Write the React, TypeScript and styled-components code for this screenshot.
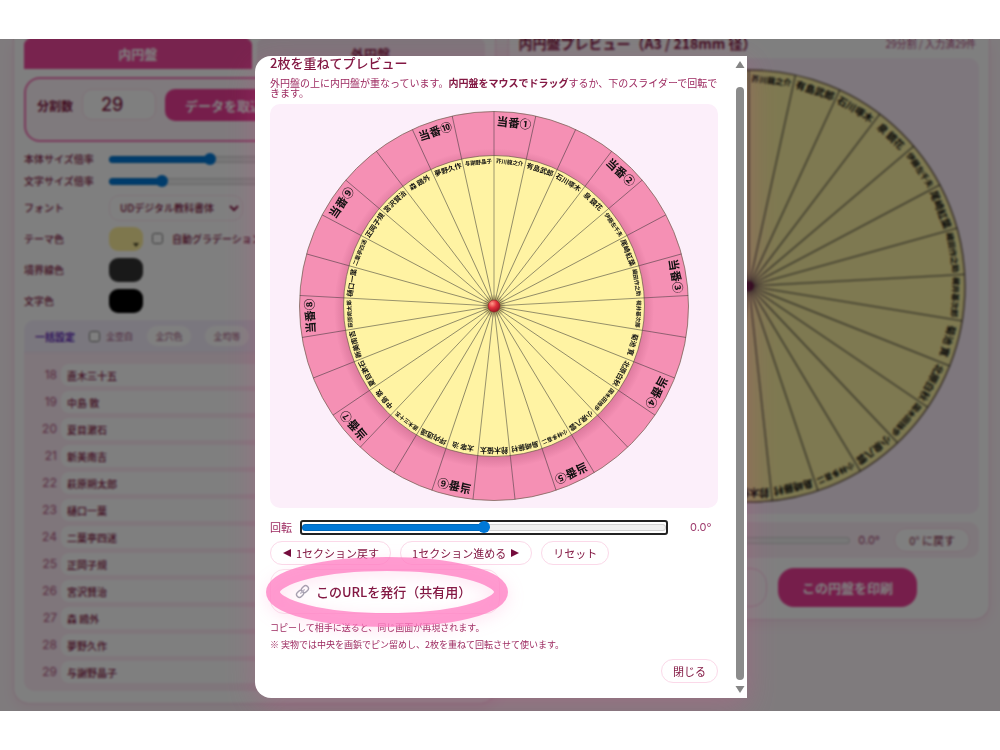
import React, { useState } from "react";
import styled, { createGlobalStyle, css } from "styled-components";

const GlobalStyle = createGlobalStyle`
  * { box-sizing: border-box; }
  body { margin: 0; background: #fff; }
  body, button, input, select {
    font-family: "Noto Sans CJK JP", "Noto Sans", sans-serif;
  }
  h2, p, ol { margin: 0; padding: 0; }
`;

const authors = [
  "芥川龍之介", "有島武郎", "石川啄木", "泉 鏡花", "伊藤左千夫", "尾崎紅葉",
  "織田作之助", "梶井基次郎", "菊池 寛", "北原白秋", "国木田独歩", "小泉八雲",
  "小林多喜二", "島崎藤村", "鈴木優太", "太宰 治", "坪内逍遥", "直木三十五",
  "中島 敦", "夏目漱石", "新美南吉", "萩原朔太郎", "樋口一葉", "二葉亭四迷",
  "正岡子規", "宮沢賢治", "森 鴎外", "夢野久作", "与謝野晶子",
];
const FIRST_LISTED = 18;
const duties = "①②③④⑤⑥⑦⑧⑨⑩".split("");
const dutyLabels = authors.map((_, i) => (i % 3 === 0 ? `当番${duties[i / 3]}` : ""));
const STEP = 360 / authors.length;

/* ---------- page ---------- */

const Screen = styled.main`
  padding: 39px 0;
`;

const Frame = styled.div`
  position: relative;
  overflow: hidden;
  background: #fff7fb;
`;

const Columns = styled.div`
  display: grid;
  grid-template-columns: 1fr 1fr;
  align-items: start;
  gap: 12px;
  padding: 0 10px 7px 13px;
`;

const Card = styled.section`
  padding: 0 10px 12px;
  background: #fff;
  border: 1px solid #fbd5e8;
  border-top: 0;
  border-radius: 0 0 16px 16px;
  box-shadow: 0 4px 14px rgba(236, 72, 153, 0.1);
  min-width: 0;
`;

const Tabs = styled.div`
  display: grid;
  grid-template-columns: 1fr 1fr;
  gap: 5px;
  margin-bottom: 8px;
`;

const Tab = styled.button<{ $active?: boolean }>`
  height: 30px;
  padding: 0;
  border: 0;
  border-radius: 6px 6px 0 0;
  font-size: 13px;
  font-weight: 700;
  line-height: 26px;
  color: ${(p) => (p.$active ? "#fff" : "#831843")};
  background: ${(p) => (p.$active ? "#f0479c" : "#fbeaf4")};
`;

const DivisionBox = styled.div`
  display: flex;
  align-items: flex-start;
  gap: 9px;
  height: 65px;
  padding: 10px 11px;
  margin-bottom: 6px;
  border: 2px solid #f472b6;
  border-radius: 16px;
  background: #fff5fa;
`;

const DivisionLabel = styled.label`
  font-size: 12px;
  font-weight: 700;
  line-height: 34px;
  color: #831843;
`;

const DivisionInput = styled.input`
  width: 74px;
  height: 31px;
  padding: 0 18px;
  border: 1px solid #fbdcec;
  border-radius: 10px;
  background: #fff;
  font-family: Inter, sans-serif;
  font-size: 18px;
  font-weight: 500;
  color: #831843;
`;

const PrimaryButton = styled.button<{ $wide?: boolean }>`
  height: ${(p) => (p.$wide ? 39 : 32)}px;
  width: ${(p) => (p.$wide ? "139px" : "auto")};
  padding: 0 20px;
  border: 0;
  border-radius: ${(p) => (p.$wide ? 16 : 10)}px;
  background: #ec3d96;
  color: #fff;
  font-size: 13px;
  font-weight: 700;
  white-space: nowrap;
`;

const Field = styled.div<{ $tall?: boolean }>`
  display: grid;
  grid-template-columns: 75px 1fr;
  align-items: center;
  gap: 10px;
  height: ${(p) => (p.$tall ? 31 : 22)}px;
`;

const FieldLabel = styled.label`
  font-size: 10px;
  font-weight: 500;
  line-height: 14px;
  color: #831843;
  white-space: nowrap;
`;

const Line = styled.div`
  display: flex;
  align-items: center;
  gap: 9px;
  min-width: 0;
`;

const FontSelect = styled.select`
  width: 134px;
  height: 26px;
  padding: 0 6px;
  border: 1px solid #fbe6f1;
  border-radius: 10px;
  background: #fff;
  font-size: 10px;
  font-weight: 500;
  color: #831843;
`;

const Swatch = styled.button<{ $color: string }>`
  display: flex;
  align-items: flex-end;
  justify-content: flex-end;
  width: 34px;
  height: 24px;
  padding: 4px;
  border: 0;
  border-radius: 9px;
  background: ${(p) => p.$color};
`;

const Tick = styled.input.attrs({ type: "checkbox" })`
  width: 11px;
  height: 11px;
  margin: 0;
`;

const Bulk = styled.div`
  display: flex;
  align-items: center;
  gap: 14px;
  height: 33px;
  margin-top: 4px;
  padding: 0 11px;
  border-radius: 10px 10px 0 0;
  background: #f5effc;
  border-bottom: 1px solid #f6e2f3;
  font-size: 9px;
  color: #9d4f78;
`;

const BulkTitle = styled.strong`
  font-size: 10px;
  color: #5b21b6;
`;

const BulkTick = styled.label`
  display: flex;
  align-items: center;
  gap: 6px;
`;

const Pill = styled.button`
  height: 20px;
  width: 44px;
  padding: 0;
  border: 0;
  border-radius: 10px;
  background: #fff;
  font-size: 9px;
  color: #9d4f78;
`;

const NameList = styled.ol`
  display: grid;
  gap: 5px;
  padding: 11px 9px 8px;
  list-style: none;
  background: #feecf6;
  border-radius: 0 0 10px 10px;
`;

const NameRow = styled.li`
  display: grid;
  grid-template-columns: 24px 1fr;
  gap: 4px;
`;

const NameNumber = styled.label`
  font-family: Inter, sans-serif;
  font-size: 12px;
  line-height: 22px;
  text-align: right;
  color: #b0557f;
`;

const NameInput = styled.input`
  width: 100%;
  height: 22px;
  padding: 0 6px;
  border: 0;
  border-radius: 8px;
  background: #fff;
  font-size: 10px;
  font-weight: 500;
  color: #831843;
`;

/* ---------- sliders ---------- */

const trackFill = css<{ $fill: number }>`
  background: linear-gradient(
    to right,
    #0078d7 ${(p) => p.$fill}%,
    #efefef ${(p) => p.$fill}%
  );
`;

const Range = styled.input.attrs({ type: "range" })<{ $fill: number; $framed?: boolean }>`
  appearance: none;
  flex: 1;
  width: 100%;
  min-width: 0;
  height: ${(p) => (p.$framed ? 15 : 12)}px;
  margin: 0;
  background: transparent;
  border: ${(p) => (p.$framed ? "2px solid #222" : "0")};
  border-radius: 3px;

  &::-webkit-slider-runnable-track {
    height: 7px;
    border-radius: 4px;
    box-shadow: inset 0 0 0 1px rgba(0, 0, 0, 0.12);
    ${trackFill}
  }

  &::-webkit-slider-thumb {
    appearance: none;
    width: 12px;
    height: 12px;
    margin-top: -3px;
    border-radius: 50%;
    background: #0078d7;
  }
`;

/* ---------- preview column ---------- */

const PreviewHead = styled.div`
  display: flex;
  justify-content: space-between;
  margin-bottom: 9px;
  line-height: 10px;
  white-space: nowrap;
  color: #831843;
`;

const PreviewTitle = styled.h2`
  font-size: 14px;
  font-weight: 700;
  line-height: 8px;
`;

const PreviewMeta = styled.span`
  padding-right: 3px;
  font-size: 10px;
  color: #b04a80;
`;

const Stage = styled.div<{ $pad: number; $disc: number }>`
  display: grid;
  justify-items: center;
  padding: ${(p) => p.$pad}px;
  border-radius: 10px;
  background: #fceffa;

  svg {
    display: block;
    width: 100%;
    max-width: ${(p) => p.$disc}px;
    overflow: visible;
  }
`;

const AngleBar = styled.div`
  display: flex;
  align-items: center;
  gap: 8px;
  height: 36px;
  margin: 8px 0 10px;
  padding: 0 9px;
  border-radius: 10px;
  background: #fdeff7;
  font-size: 10px;
  color: #9d4f78;
`;

const AngleValue = styled.output`
  font-family: Inter, sans-serif;
  font-size: 11px;
  width: 28px;
  color: #9d3a6c;
`;

const PrintRow = styled.div`
  display: flex;
  justify-content: flex-end;
  gap: 11px;
  padding-right: 62px;
`;

const GhostButton = styled.button`
  width: 140px;
  height: 39px;
  padding: 0 20px 0 0;
  border: 1px solid #fbcfe8;
  border-radius: 16px;
  background: #fff;
  color: #831843;
  font-size: 13px;
  white-space: nowrap;
`;

const DiscLabel = styled.text<{ $size: number }>`
  font-size: ${(p) => p.$size}px;
  font-weight: 700;
  text-anchor: middle;
  dominant-baseline: central;
  font-family: "Noto Sans CJK JP", sans-serif;
  fill: #111;
`;

/* ---------- modal ---------- */

const Overlay = styled.div`
  position: absolute;
  inset: 0;
  display: grid;
  place-items: center;
  padding: 4px 0 0 2px;
  background: rgba(0, 0, 0, 0.5);
  backdrop-filter: blur(1px);
`;

const Modal = styled.div`
  display: grid;
  grid-template-columns: 1fr 14px;
  width: 492px;
  max-width: 100%;
  background: #fff;
  border-radius: 16px 0 0 16px;
  box-shadow: 0 8px 30px rgba(236, 72, 153, 0.25);
`;

const ModalBody = styled.div`
  padding: 0 15px 15px;
  color: #9d2a60;
`;

const ModalTitle = styled.h2`
  font-size: 13px;
  font-weight: 500;
  line-height: 14px;
  color: #831843;
`;

const Lead = styled.p`
  margin: 8px 0 6px;
  font-size: 10px;
  line-height: 10px;
  white-space: nowrap;

  strong { color: #831843; }
`;

const RotateRow = styled.div`
  display: grid;
  grid-template-columns: 22px 1fr 42px;
  align-items: center;
  column-gap: 8px;
  height: 22px;
  margin: 8px 0 3px;
  font-size: 11px;

  output { margin-left: 14px; }
`;

const ButtonRow = styled.div<{ $end?: boolean }>`
  display: flex;
  gap: 9px;
  justify-content: ${(p) => (p.$end ? "flex-end" : "flex-start")};
  padding-top: ${(p) => (p.$end ? 3 : 0)}px;
`;

const SoftButton = styled.button<{ $roomy?: boolean }>`
  display: flex;
  align-items: center;
  gap: 4px;
  height: 24px;
  padding: 0 ${(p) => (p.$roomy ? 14 : 11)}px;
  border: 1px solid #fbd9e9;
  border-radius: 12px;
  background: #fff;
  font-size: 11px;
  line-height: 14px;
  color: #831843;
  white-space: nowrap;
`;

const ShareArea = styled.div`
  position: relative;
  width: 230px;
  margin: 4px 0 8px;
`;

const ShareButton = styled.button`
  display: flex;
  align-items: center;
  gap: 6px;
  width: 100%;
  height: 45px;
  padding: 0 0 0 24px;
  border: 1px solid #fbe3ee;
  border-radius: 14px;
  background: #fff;
  font-size: 13px;
  font-weight: 500;
  line-height: 18px;
  color: #831843;
  white-space: nowrap;
`;

const Marker = styled.svg`
  position: absolute;
  top: -12px;
  left: -4px;
  width: 242px;
  height: 70px;
  overflow: visible;
  pointer-events: none;
  filter: drop-shadow(0 4px 8px rgba(255, 120, 190, 0.25));
`;

const Hint = styled.p`
  margin-bottom: 5px;
  font-size: 9px;
  line-height: 12px;
`;

const ScrollTrack = styled.div`
  display: flex;
  flex-direction: column;
  align-items: center;
  gap: 4px;
  padding: 4px 0 4px 0;

  svg { display: block; }
`;

const ScrollThumb = styled.div`
  flex: 1;
  width: 8px;
  margin-top: 13px;
  border-radius: 4px;
  background: #8b8b8b;
`;

/* ---------- drawings ---------- */

type DiscProps = {
  radius: number;
  fill: string;
  labels: string[];
  labelRadius: number;
  size: number;
  smallSize: number;
};

function Disc({ radius, fill, labels, labelRadius, size, smallSize }: DiscProps) {
  return (
    <g>
      <circle r={radius} fill={fill} stroke="#6b5a4a" strokeWidth="1.4" />
      {labels.map((_, i) => (
        <line
          key={i}
          y2={-radius}
          transform={`rotate(${i * STEP})`}
          stroke="#333"
          strokeOpacity="0.75"
          strokeWidth="1.3"
        />
      ))}
      {labels.map((label, i) =>
        label ? (
          <DiscLabel
            key={i}
            $size={label.length > 4 ? smallSize : size}
            transform={`rotate(${(i + 0.5) * STEP}) translate(0 ${-labelRadius})`}
          >
            {label}
          </DiscLabel>
        ) : null
      )}
    </g>
  );
}

function StackedDiscs({ angle }: { angle: number }) {
  return (
    <svg viewBox="-390 -390 780 780" role="img" aria-label="重ねた円盤">
      <defs>
        <radialGradient id="pin" cx="0.35" cy="0.3" r="0.8">
          <stop offset="0" stopColor="#ff9a8a" />
          <stop offset="0.45" stopColor="#e0323c" />
          <stop offset="1" stopColor="#8f1020" />
        </radialGradient>
        <radialGradient id="discShadow">
          <stop offset="0.92" stopColor="#8c2f55" stopOpacity="0.26" />
          <stop offset="1" stopColor="#8c2f55" stopOpacity="0" />
        </radialGradient>
        <radialGradient id="pinShadow">
          <stop offset="0.3" stopColor="#5a4a20" stopOpacity="0.7" />
          <stop offset="1" stopColor="#5a4a20" stopOpacity="0" />
        </radialGradient>
      </defs>
      <Disc radius={389} fill="#f590b4" labels={dutyLabels} labelRadius={370} size={23} smallSize={23} />
      <circle cy="5" r="320" fill="url(#discShadow)" />
      <g transform={`rotate(${angle})`}>
        <Disc radius={301} fill="#fff3a3" labels={authors} labelRadius={289} size={14} smallSize={11} />
      </g>
      <circle r="24" fill="url(#pinShadow)" />
      <circle r="12" fill="url(#pin)" stroke="#8f1d1d" strokeWidth="1" />
    </svg>
  );
}

function Triangle({ dir }: { dir: "left" | "right" | "up" | "down" }) {
  const paths = {
    left: "M9 1 1 5l8 4z",
    right: "M1 1l8 4-8 4z",
    up: "M5 1l4.500 7h-9z",
    down: "M5 9l4.500-7h-9z",
  };
  const vertical = dir === "up" || dir === "down";
  return (
    <svg width="10" height="10" viewBox="0 0 10 10" aria-hidden="true">
      <path d={paths[dir]} fill={vertical ? "#858585" : "#740b3c"} />
    </svg>
  );
}

function LinkIcon() {
  return (
    <svg width="15" height="15" viewBox="0 0 24 24" fill="none" aria-hidden="true">
      <g transform="rotate(-45 12 12)" strokeLinecap="round">
        <rect x="0.500" y="7.500" width="12" height="9" rx="4.500" stroke="#a3a3b0" strokeWidth="2.200" />
        <rect x="11.500" y="7.500" width="12" height="9" rx="4.500" stroke="#a3a3b0" strokeWidth="2.200" />
        <path d="M8 12h8" stroke="#bcbcc8" strokeWidth="2.200" />
      </g>
    </svg>
  );
}

/* ---------- sections ---------- */

function SettingsCard() {
  return (
    <Card>
      <Tabs>
        <Tab $active>内円盤</Tab>
        <Tab>外円盤</Tab>
      </Tabs>
      <DivisionBox>
        <DivisionLabel htmlFor="division">分割数</DivisionLabel>
        <DivisionInput id="division" defaultValue="29" />
        <PrimaryButton>データを取込</PrimaryButton>
      </DivisionBox>
      <Field>
        <FieldLabel htmlFor="bodyScale">本体サイズ倍率</FieldLabel>
        <Range id="bodyScale" $fill={26} min={0} max={100} defaultValue={26} />
      </Field>
      <Field>
        <FieldLabel htmlFor="textScale">文字サイズ倍率</FieldLabel>
        <Range id="textScale" $fill={14} min={0} max={100} defaultValue={13} />
      </Field>
      <Field $tall>
        <FieldLabel htmlFor="font">フォント</FieldLabel>
        <FontSelect id="font">
          <option>UDデジタル教科書体</option>
        </FontSelect>
      </Field>
      <Field $tall>
        <FieldLabel htmlFor="theme">テーマ色</FieldLabel>
        <Line>
          <Swatch id="theme" $color="#fdee9b">
            <svg width="6" height="4" viewBox="0 0 6 4" aria-hidden="true">
              <path d="M0 0h6L3 4z" fill="#4d4a2a" />
            </svg>
          </Swatch>
          <Tick id="gradient" />
          <FieldLabel htmlFor="gradient">自動グラデーション</FieldLabel>
        </Line>
      </Field>
      <Field $tall>
        <FieldLabel htmlFor="border">境界線色</FieldLabel>
        <Swatch id="border" $color="#333" />
      </Field>
      <Field $tall>
        <FieldLabel htmlFor="ink">文字色</FieldLabel>
        <Swatch id="ink" $color="#000" />
      </Field>
      <Bulk>
        <BulkTitle>一括設定</BulkTitle>
        <BulkTick>
          <Tick />
          全空白
        </BulkTick>
        <Pill>全穴色</Pill>
        <Pill>全均等</Pill>
      </Bulk>
      <NameList>
        {authors.slice(FIRST_LISTED - 1).map((name, i) => {
          const n = FIRST_LISTED + i;
          return (
            <NameRow key={n}>
              <NameNumber htmlFor={`name${n}`}>{n}</NameNumber>
              <NameInput id={`name${n}`} defaultValue={name} />
            </NameRow>
          );
        })}
      </NameList>
    </Card>
  );
}

function PreviewCard() {
  return (
    <Card>
      <PreviewHead>
        <PreviewTitle>内円盤プレビュー（A3 / 218mm 径）</PreviewTitle>
        <PreviewMeta>29分割 / 入力済29件</PreviewMeta>
      </PreviewHead>
      <Stage $pad={11} $disc={434}>
        <svg viewBox="-217 -217 434 434" role="img" aria-label="内円盤">
          <Disc radius={216} fill="#fdf2a2" labels={authors} labelRadius={207} size={10} smallSize={8} />
          <circle r="5" fill="#4a1030" />
        </svg>
      </Stage>
      <AngleBar>
        <label htmlFor="previewAngle">回転</label>
        <Range id="previewAngle" $fill={50} min={-180} max={180} defaultValue={0} />
        <AngleValue>0.0°</AngleValue>
        <SoftButton $roomy>0° に戻す</SoftButton>
      </AngleBar>
      <PrintRow>
        <GhostButton>重ねてプレビュー</GhostButton>
        <PrimaryButton $wide>この円盤を印刷</PrimaryButton>
      </PrintRow>
    </Card>
  );
}

function OverlapModal() {
  const [angle, setAngle] = useState(0);
  return (
    <Modal role="dialog" aria-labelledby="overlapTitle">
      <ModalBody>
        <ModalTitle id="overlapTitle">2枚を重ねてプレビュー</ModalTitle>
        <Lead>
          外円盤の上に内円盤が重なっています。<strong>内円盤をマウスでドラッグ</strong>するか、下のスライダーで回転で
          <br />
          きます。
        </Lead>
        <Stage $pad={7} $disc={390}>
          <StackedDiscs angle={angle} />
        </Stage>
        <RotateRow>
          <label htmlFor="angle">回転</label>
          <Range
            id="angle"
            $framed
            $fill={((angle + 180) / 360) * 100}
            min={-180}
            max={180}
            value={angle}
            onChange={(e) => setAngle(Number(e.target.value))}
          />
          <AngleValue>{angle.toFixed(1)}°</AngleValue>
        </RotateRow>
        <ButtonRow>
          <SoftButton onClick={() => setAngle(angle - STEP)}>
            <Triangle dir="left" />
            1セクション戻す
          </SoftButton>
          <SoftButton onClick={() => setAngle(angle + STEP)}>
            1セクション進める
            <Triangle dir="right" />
          </SoftButton>
          <SoftButton onClick={() => setAngle(0)}>リセット</SoftButton>
        </ButtonRow>
        <ShareArea>
          <ShareButton>
            <LinkIcon />
            このURLを発行（共有用）
          </ShareButton>
          <Marker viewBox="0 0 242 70" aria-hidden="true">
            <ellipse
              cx="121"
              cy="35"
              rx="114"
              ry="28"
              fill="none"
              stroke="#ff7cc2"
              strokeOpacity="0.75"
              strokeWidth="14"
            />
          </Marker>
        </ShareArea>
        <Hint>コピーして相手に送ると、同じ画面が再現されます。</Hint>
        <Hint>※ 実物では中央を画鋲でピン留めし、2枚を重ねて回転させて使います。</Hint>
        <ButtonRow $end>
          <SoftButton>閉じる</SoftButton>
        </ButtonRow>
      </ModalBody>
      <ScrollTrack aria-hidden="true">
        <Triangle dir="up" />
        <ScrollThumb />
        <Triangle dir="down" />
      </ScrollTrack>
    </Modal>
  );
}

export default function App() {
  return (
    <Screen>
      <GlobalStyle />
      <Frame>
        <Columns>
          <SettingsCard />
          <PreviewCard />
        </Columns>
        <Overlay>
          <OverlapModal />
        </Overlay>
      </Frame>
    </Screen>
  );
}
